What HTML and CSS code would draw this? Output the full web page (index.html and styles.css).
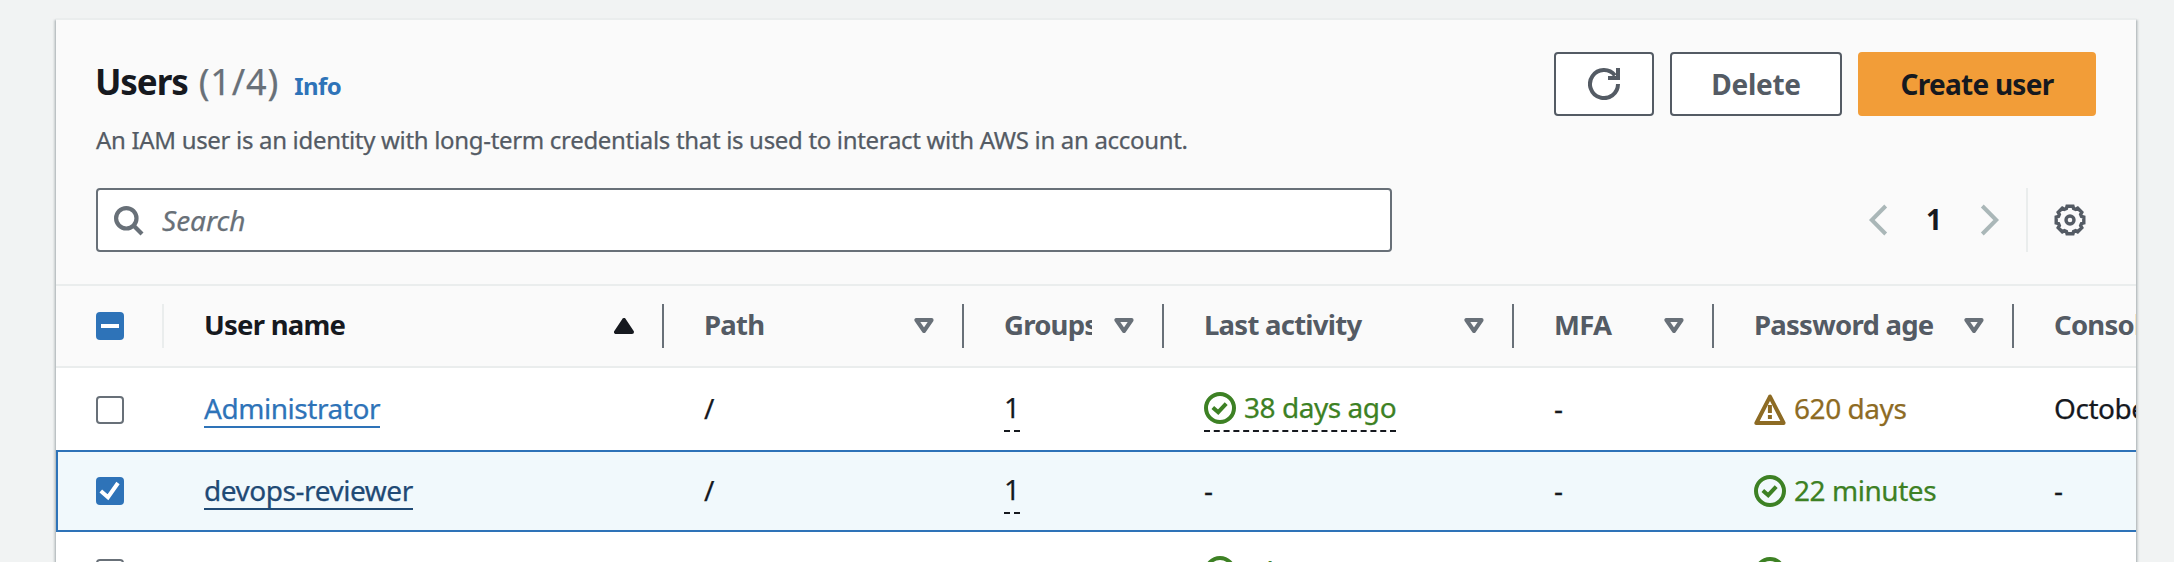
FILE: index.html
```html
<!DOCTYPE html>
<html lang="en">
<head>
<meta charset="utf-8">
<title>Users</title>
<link rel="stylesheet" href="styles.css">
</head>
<body>
<svg class="sprite" width="0" height="0">
  <symbol id="ok" viewBox="0 0 16 16"><circle cx="8" cy="8" r="7"/><path d="M4.4 7.7 7.1 10.1 11.1 5.8"/></symbol>
  <symbol id="warn" viewBox="0 0 16 16"><path d="M8 1.8 1.2 15h13.6z" stroke-linejoin="round"/><path d="M7.95 6v4M7.95 11v2"/></symbol>
  <symbol id="sort" viewBox="0 0 20 16"><path d="M2.4 2h15.2L10 13z" stroke-linejoin="round"/></symbol>
</svg>
<main class="panel">
  <header class="head">
    <div class="head-row">
      <h1 class="title">Users <span class="count">(1/4)</span><a class="info">Info</a></h1>
      <div class="actions">
        <button class="btn btn-icon" aria-label="Refresh"><svg class="icon" viewBox="0 0 16 16"><path d="M10 5h5V0"/><path d="M15 8a7 7 0 1 1-1.5-4.3"/></svg></button>
        <button class="btn btn-delete">Delete</button>
        <button class="btn btn-primary">Create user</button>
      </div>
    </div>
    <p class="desc">An IAM user is an identity with long-term credentials that is used to interact with AWS in an account.</p>
    <div class="tools">
      <div class="search">
        <svg class="search-icon" viewBox="0 0 32 32"><circle cx="14.3" cy="14.3" r="10.2"/><path d="M21.5 21.5 30 30"/></svg>
        <span class="placeholder">Search</span>
      </div>
      <div class="pager">
        <svg class="chev" viewBox="0 0 20 32"><path d="M17.7 2 3.8 16 17.7 30"/></svg>
        <span class="page">1</span>
        <svg class="chev" viewBox="0 0 20 32"><path d="M2.3 2 16.2 16 2.3 30"/></svg>
      </div>
      <div class="prefs">
        <svg class="icon gear" viewBox="0 0 16 16"><path d="M14.9 9.47 13.72 9.8 13.32 10.77 13.91 11.84 11.84 13.91 10.77 13.32 9.8 13.72 9.47 14.9 6.53 14.9 6.2 13.72 5.23 13.32 4.16 13.91 2.09 11.84 2.68 10.77 2.28 9.8 1.1 9.47 1.1 6.53 2.28 6.2 2.68 5.23 2.09 4.16 4.16 2.09 5.23 2.68 6.2 2.28 6.53 1.1 9.47 1.1 9.8 2.28 10.77 2.68 11.84 2.09 13.91 4.16 13.32 5.23 13.72 6.2 14.9 6.53z"/><circle cx="8" cy="8" r="2"/></svg>
      </div>
    </div>
  </header>

  <section class="table">
    <div class="row row-head">
      <div class="th th-check"><span class="box box-on"><svg viewBox="0 0 28 28"><path d="M5 14h18"/></svg></span></div>
      <div class="th th-sorted"><span class="label">User name</span><svg class="caret caret-up" viewBox="0 0 20 16"><path d="M2 14h16L10 2z" stroke-linejoin="round"/></svg></div>
      <div class="th"><span class="label">Path</span><svg class="caret"><use href="#sort"/></svg></div>
      <div class="th"><span class="label">Groups</span><svg class="caret"><use href="#sort"/></svg></div>
      <div class="th"><span class="label">Last activity</span><svg class="caret"><use href="#sort"/></svg></div>
      <div class="th"><span class="label">MFA</span><svg class="caret"><use href="#sort"/></svg></div>
      <div class="th"><span class="label">Password age</span><svg class="caret"><use href="#sort"/></svg></div>
      <div class="th"><span class="label">Console</span></div>
    </div>
    <div class="row row-first">
      <div class="td-check"><span class="box"></span></div>
      <div class="td"><a class="link">Administrator</a></div>
      <div class="td">/</div>
      <div class="td"><span class="pop">1</span></div>
      <div class="td"><span class="pop status ok"><svg class="icon"><use href="#ok"/></svg>38 days ago</span></div>
      <div class="td">-</div>
      <div class="td"><span class="status warn"><svg class="icon"><use href="#warn"/></svg>620 days</span></div>
      <div class="td">October</div>
    </div>
    <div class="row row-selected">
      <div class="td-check"><span class="box box-on"><svg viewBox="0 0 28 28"><path d="M4.8 14 12 20.2 22 6"/></svg></span></div>
      <div class="td"><a class="link link-hover">devops-reviewer</a></div>
      <div class="td">/</div>
      <div class="td"><span class="pop">1</span></div>
      <div class="td">-</div>
      <div class="td">-</div>
      <div class="td"><span class="status ok"><svg class="icon"><use href="#ok"/></svg>22 minutes</span></div>
      <div class="td">-</div>
    </div>
    <div class="row">
      <div class="td-check"><span class="box"></span></div>
      <div class="td"><a class="link">viewer</a></div>
      <div class="td">/</div>
      <div class="td"><span class="pop">1</span></div>
      <div class="td"><span class="pop status ok"><svg class="icon"><use href="#ok"/></svg>4 hours ago</span></div>
      <div class="td">-</div>
      <div class="td"><span class="status ok"><svg class="icon"><use href="#ok"/></svg>9 minutes</span></div>
      <div class="td">-</div>
    </div>
  </section>
</main>
</body>
</html>
```

FILE: styles.css
```css
* { box-sizing: border-box; }

body {
  margin: 0;
  height: 562px;
  padding: 18px 38px 0 56px;
  overflow: hidden;
  background: #f1f3f3;
  color: #16191f;
  font: 28px/44px "Noto Sans", "Open Sans", sans-serif;
  -webkit-text-stroke: .25px;
}

svg { display: block; flex: none; fill: none; stroke: currentColor; }
.sprite { position: absolute; }
.icon { width: 32px; height: 32px; stroke-width: 2; }

.panel {
  height: 544px;
  border-top: 2px solid #eaeded;
  background: #fff;
  box-shadow:
    0 2px 2px 0 rgba(0, 28, 36, .3),
    2px 2px 2px 0 rgba(0, 28, 36, .15),
    -2px 2px 2px 0 rgba(0, 28, 36, .15);
}

/* Header */
.head { height: 264px; padding: 32px 40px 0; background: #fafafa; }
.head-row { display: flex; justify-content: space-between; }
.title {
  margin: 5px 0 0 -1px;
  font-size: 35px;
  line-height: 50px;
  font-weight: 700;
  letter-spacing: -1.1px;
  -webkit-text-stroke: 0;
}
.count { margin-left: 3px; font-size: 36px; font-weight: 400; letter-spacing: .9px; color: #687078; -webkit-text-stroke: .25px; }
.info { margin-left: 15px; font-size: 24px; letter-spacing: -.6px; color: #2e73b8; }
.actions { display: flex; gap: 16px; -webkit-text-stroke: 0; }
.btn {
  display: flex;
  align-items: center;
  justify-content: center;
  height: 64px;
  padding: 0 0 1px;
  border: 2px solid #545b64;
  border-radius: 4px;
  background: #fff;
  color: #545b64;
  font: inherit;
  font-weight: 700;
}
.btn-icon { width: 100px; padding: 0; }
.btn-delete { width: 172px; letter-spacing: -.3px; }
.btn-primary { width: 238px; border-color: #f29d38; background: #f29d38; color: #16191f; letter-spacing: -.75px; }
.desc { margin: 2px 0 26px; font-size: 24px; line-height: 44px; letter-spacing: -.32px; color: #545b64; }

.tools { display: flex; height: 64px; align-items: center; }
.search {
  display: flex;
  align-items: center;
  gap: 18px;
  width: 1296px;
  height: 64px;
  padding-left: 14px;
  border: 2px solid #687078;
  border-radius: 4px;
  background: #fff;
  color: #687078;
}
.search-icon { width: 32px; height: 32px; stroke-width: 4.2; }
.placeholder { font-style: italic; }
.pager { display: flex; align-items: center; gap: 38px; margin-left: auto; padding-right: 26px; }
.chev { width: 20px; height: 32px; stroke-width: 4; color: #aab7b8; }
.page { width: 16px; padding: 0 0 2px; font-weight: 700; -webkit-text-stroke: 0; }
.prefs { display: flex; align-items: center; height: 64px; padding: 0 10px 0 26px; border-left: 2px solid #eaeded; color: #545b64; }
.gear { stroke-width: 1.7; }

/* Table */
.table { height: 278px; overflow: hidden; }
.row {
  display: grid;
  grid-template-columns: 108px 500px 300px 200px 350px 200px 300px 300px;
  width: 2258px;
  height: 82px;
}
.row-head {
  height: 84px;
  border: solid #eaeded;
  border-width: 2px 0;
  background: #fafafa;
  color: #545b64;
  -webkit-text-stroke: 0;
}
.th {
  display: flex;
  align-items: center;
  gap: 22px;
  height: 44px;
  margin: 18px 0;
  padding: 0 28px 0 40px;
  border-right: 2px solid #687078;
}
.th-check { border-color: #eaeded; }
.th-sorted { color: #16191f; }
.label {
  flex: 1;
  min-width: 0;
  padding-bottom: 2px;
  overflow: hidden;
  white-space: nowrap;
  font-size: 27.5px;
  font-weight: 700;
  letter-spacing: -.75px;
}
.caret { width: 20px; height: 16px; stroke-width: 4; color: #687078; }
.caret-up { fill: currentColor; color: #16191f; }

.box { display: block; width: 28px; height: 28px; border: 2px solid #687078; border-radius: 4px; background: #fff; }
.box-on { border: 0; background: #2e73b8; color: #fff; }
.box-on svg { width: 28px; height: 28px; stroke-width: 4; }

.td-check { padding: 27px 0 0 40px; }
.row-first .td-check { padding-top: 28px; }
.td {
  display: flex;
  align-items: flex-start;
  padding: 18px 0 0 40px;
  white-space: nowrap;
  letter-spacing: -.45px;
}
.row-selected { background: #f1f9fc; box-shadow: inset 0 0 0 2px #2e73b8; }
.link { margin-top: 4px; line-height: 36px; border-bottom: 2px solid; color: #2e73b8; }
.link-hover { color: #1f4a75; }
.pop { line-height: 42px; padding-bottom: 2px; border-bottom: 2px dashed #16191f; }
.status { display: flex; align-items: center; gap: 8px; }
.status .icon { margin-top: 2px; }
.ok { color: #3d8124; }
.warn { color: #8d6b24; }
```
